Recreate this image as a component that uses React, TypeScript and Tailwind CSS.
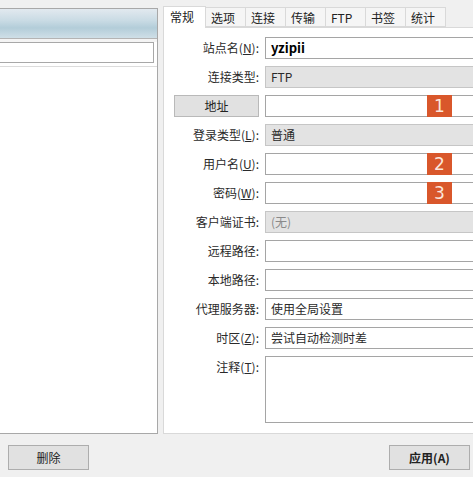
import React from "react";

const font = { fontFamily: '"Noto Sans CJK SC", "Noto Sans", sans-serif' };

function Badge({ n }: { n: string }) {
  return (
    <div className="absolute left-[162px] top-0 w-[25px] h-[22px] bg-[#d9572b] text-[#fbe6dc] text-[17px] leading-[22px] font-normal text-center" style={{ fontFamily: '"DejaVu Sans", sans-serif' }}>
      {n}
    </div>
  );
}

function Row({
  label,
  children,
  h = 22,
}: {
  label: React.ReactNode;
  children: React.ReactNode;
  h?: number;
}) {
  return (
    <div className="flex items-start">
      <div className="w-[95px] shrink-0 text-right h-[22px] leading-[22px] text-[12px] text-[#2a2a2a]">{label}</div>
      <div className="ml-[6px] relative" style={{ height: h }}>{children}</div>
    </div>
  );
}

function Input({ children, gray, blue, h = 22, muted }: { children?: React.ReactNode; gray?: boolean; blue?: boolean; h?: number; muted?: boolean }) {
  return (
    <div
      className={
        "w-[230px] border px-[5px] text-[12px] leading-[20px] " +
        (gray ? "bg-[#e3e3e3] border-[#c6c6c6] " : "bg-white border-[#a5a5a5] ") +
        (blue ? "border-[#8fb0cf] " : "") +
        (muted ? "text-[#8a8a8a] " : "text-[#2a2a2a] ")
      }
      style={{ height: h }}
    >
      {children}
    </div>
  );
}

export default function App() {
  const tabs = ["选项", "连接", "传输", "FTP", "书签", "统计"];
  return (
    <div className="w-[473px] h-[477px] bg-[#f0f0f0] overflow-hidden relative" style={font}>
      <div className="flex pt-[6px] h-[434px]">
        {/* Left panel */}
        <div className="w-[158px] shrink-0 mt-[2px] flex flex-col border-t border-r border-b border-[#a8a8a8] bg-white">
          <div className="h-[30px] bg-[linear-gradient(to_bottom,#e2e9ef_0%,#c9dbe4_40%,#b3cdd9_65%,#cfdfe7_100%)] border-b border-[#b4b4b4]" />
          <div className="h-[3px] bg-[#f4f4f4]" />
          <div className="w-[154px] h-[21px] border-t border-r border-b border-[#a8a8a8] bg-white" />
          <div className="h-[3px]" />
          <div className="h-[1px] bg-[#dcdcdc]" />
          <div className="flex-1 bg-white" />
        </div>
        {/* Right panel */}
        <div className="ml-[5px] w-[320px] shrink-0 flex flex-col">
          <div className="flex h-[21px] items-end relative z-10">
            <div className="w-[43px] h-[22px] bg-white border-t border-l border-r border-[#d9d9d9] text-[12px] leading-[20px] pl-[6px] text-[#222] -mb-[1px]">常规</div>
            {tabs.map((t) => (
              <div key={t} className="w-[40px] h-[20px] bg-[#f5f5f5] border-t border-r border-b border-[#d9d9d9] text-[12px] leading-[20px] pl-[5px] text-[#222]">
                {t}
              </div>
            ))}
          </div>
          <div className="flex-1 bg-white border border-[#d9d9d9] pt-[9px] flex flex-col gap-[7px]">
            <Row label={<>站点名(<u>N</u>):</>}>
              <Input><span className="font-bold text-[13px] text-black">yzipii</span></Input>
            </Row>
            <Row label="连接类型:">
              <Input gray>FTP</Input>
            </Row>
            <div className="flex items-start">
              <div className="w-[95px] shrink-0 flex justify-end">
                <div className="w-[85px] h-[22px] bg-[#e1e1e1] border border-[#b9b9b9] text-[12px] leading-[20px] text-center text-[#222]">地址</div>
              </div>
              <div className="ml-[6px] relative h-[22px]">
                <Input blue />
                <Badge n="1" />
              </div>
            </div>
            <Row label={<>登录类型(<u>L</u>):</>}>
              <Input gray>普通</Input>
            </Row>
            <Row label={<>用户名(<u>U</u>):</>}>
              <Input />
              <Badge n="2" />
            </Row>
            <Row label={<>密码(<u>W</u>):</>}>
              <Input />
              <Badge n="3" />
            </Row>
            <Row label="客户端证书:">
              <Input gray muted>(无)</Input>
            </Row>
            <Row label="远程路径:">
              <Input />
            </Row>
            <Row label="本地路径:">
              <Input />
            </Row>
            <Row label="代理服务器:">
              <Input>使用全局设置</Input>
            </Row>
            <Row label={<>时区(<u>Z</u>):</>}>
              <Input>尝试自动检测时差</Input>
            </Row>
            <Row label={<>注释(<u>T</u>):</>} h={67}>
              <Input h={67} />
            </Row>
          </div>
        </div>
      </div>
      <div className="flex justify-between px-[3px] mt-[11px]">
        <div className="ml-[5px] w-[81px] h-[25px] bg-[#e1e1e1] border border-[#adadad] text-[12px] leading-[23px] text-center text-[#222]">删除</div>
        <div className="w-[81px] h-[25px] bg-[#e1e1e1] border border-[#adadad] text-[12px] leading-[23px] text-center font-bold text-[#222]">应用(A)</div>
      </div>
    </div>
  );
}
